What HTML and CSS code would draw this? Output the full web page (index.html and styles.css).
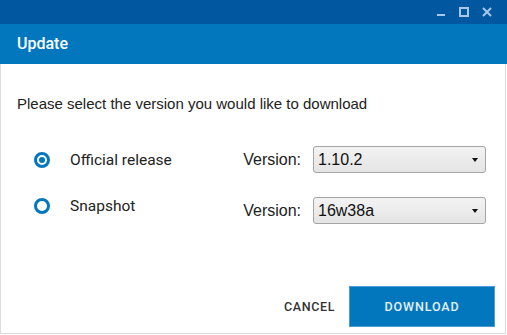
FILE: index.html
```html
<!DOCTYPE html>
<html lang="en">
<head>
    <meta charset="UTF-8">
    <meta name="viewport" content="width=device-width, initial-scale=1.0">
    <title>Update</title>
    <link rel="stylesheet" href="styles.css">
</head>
<body>

<div class="window">
    <div class="titlebar">
        <span class="win-btn">
            <svg width="10" height="10" viewBox="0 0 10 10"><rect x="1" y="7" width="8" height="2" fill="currentColor"/></svg>
        </span>
        <span class="win-btn">
            <svg width="10" height="10" viewBox="0 0 10 10"><rect x="1" y="1" width="8" height="8" fill="none" stroke="currentColor" stroke-width="2"/></svg>
        </span>
        <span class="win-btn">
            <svg width="10" height="10" viewBox="0 0 10 10"><path d="M1 1L9 9M9 1L1 9" stroke="currentColor" stroke-width="2"/></svg>
        </span>
    </div>

    <div class="header">Update</div>

    <div class="content">
        <p class="intro">Please select the version you would like to download</p>

        <div class="options">
            <div class="radios">
                <label class="radio">
                    <input type="radio" name="channel" checked>
                    <span class="radio-mark"></span>
                    <span class="radio-label">Official release</span>
                </label>
                <label class="radio">
                    <input type="radio" name="channel">
                    <span class="radio-mark"></span>
                    <span class="radio-label">Snapshot</span>
                </label>
            </div>

            <div class="versions">
                <div class="version">
                    <span class="version-label">Version:</span>
                    <div class="select">
                        <span>1.10.2</span>
                        <span class="arrow"></span>
                    </div>
                </div>
                <div class="version">
                    <span class="version-label">Version:</span>
                    <div class="select">
                        <span>16w38a</span>
                        <span class="arrow"></span>
                    </div>
                </div>
            </div>
        </div>

        <div class="actions">
            <button class="btn-flat">Cancel</button>
            <button class="btn-primary">Download</button>
        </div>
    </div>
</div>

</body>
</html>
```

FILE: styles.css
```css
body {
    margin: 0;
    background-color: #fff;
    font-family: "Liberation Sans", Arial, sans-serif;
}

.window {
    width: 507px;
    height: 335px;
    display: flex;
    flex-direction: column;
}

.titlebar {
    height: 24px;
    background-color: #0158a0;
    display: flex;
    justify-content: flex-end;
    align-items: center;
    padding-right: 15px;
    gap: 13px;
    color: #a8c6e6;
}

.win-btn {
    display: flex;
    width: 10px;
    height: 10px;
}

.header {
    height: 40px;
    background-color: #0277bd;
    color: #fff;
    font-family: Roboto, sans-serif;
    font-weight: 500;
    font-size: 16px;
    line-height: 40px;
    padding-left: 17px;
}

.content {
    flex: 1;
    border: 1px solid #dcdcdc;
    border-top: none;
    margin-right: 1px;
    margin-bottom: 1px;
    padding: 0 10px 0 16px;
    display: flex;
    flex-direction: column;
}

.intro {
    margin: 31px 0 0 0;
    font-size: 15px;
    color: #222;
}

.options {
    display: flex;
    justify-content: space-between;
    margin-top: 34px;
}

.radios {
    display: flex;
    flex-direction: column;
    gap: 26px;
    padding-top: 4px;
    margin-left: 17px;
}

.radio {
    display: flex;
    align-items: center;
    height: 20px;
}

.radio input {
    display: none;
}

.radio-mark {
    box-sizing: border-box;
    width: 16px;
    height: 16px;
    border: 3px solid #0277bd;
    border-radius: 50%;
    position: relative;
}

.radio input:checked + .radio-mark:after {
    content: "";
    position: absolute;
    left: 2px;
    top: 2px;
    width: 6px;
    height: 6px;
    border-radius: 50%;
    background-color: #0277bd;
}

.radio-label {
    margin-left: 20px;
    font-family: Roboto, sans-serif;
    font-size: 15.5px;
    color: #222;
}

.versions {
    display: flex;
    flex-direction: column;
    gap: 24px;
    margin-right: 9px;
}

.version {
    display: flex;
    align-items: center;
}

.version-label {
    font-size: 16px;
    color: #222;
    margin-right: 12px;
}

.select {
    width: 160px;
    height: 25px;
    border: 1px solid #a5a5a5;
    border-radius: 3px;
    background: linear-gradient(#f3f3f3, #e4e4e4);
    display: flex;
    align-items: center;
    justify-content: space-between;
    padding: 0 7px 0 4px;
    font-size: 16px;
    color: #111;
}

.arrow {
    width: 0;
    height: 0;
    border-left: 3.5px solid transparent;
    border-right: 3.5px solid transparent;
    border-top: 4px solid #111;
}

.actions {
    margin-top: auto;
    margin-bottom: 6px;
    display: flex;
    justify-content: flex-end;
    align-items: center;
    gap: 14px;
}

.btn-flat,
.btn-primary {
    font-family: Roboto, sans-serif;
    font-weight: 500;
    font-size: 12.5px;
    letter-spacing: 0.9px;
    text-transform: uppercase;
    cursor: pointer;
}

.btn-flat {
    background: none;
    border: none;
    color: #333;
    padding: 0;
    letter-spacing: 0.6px;
}

.btn-primary {
    width: 146px;
    height: 41px;
    background-color: #0277bd;
    border: 1px solid #4a9bd6;
    color: #e6eff8;
}
```
